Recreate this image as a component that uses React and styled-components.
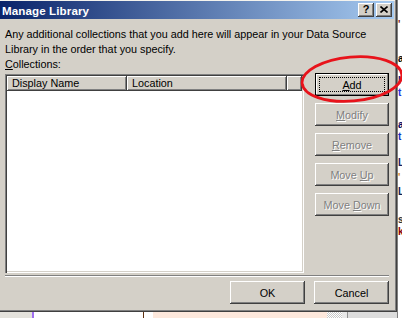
import React from 'react';
import styled, { createGlobalStyle } from 'styled-components';

const Global = createGlobalStyle`
  html, body { margin: 0; padding: 0; background: #fff; overflow: hidden; }
  #root { width: 402px; height: 318px; }
`;

const Screen = styled.div`
  position: relative;
  width: 402px;
  height: 318px;
  overflow: hidden;
  display: grid;
  grid-template-columns: 397px 5px;
  grid-template-rows: 312px 6px;
  background: #fff;
  font-family: "Liberation Sans", Arial, sans-serif;
`;

const Dialog = styled.div`
  grid-column: 1;
  grid-row: 1;
  background: #d4d0c8;
  box-shadow: inset -1px -1px #404040, inset -2px -2px #808080, inset 0 1px #f4f3ee;
  padding: 1px 3px 3px 0;
  display: flex;
  flex-direction: column;
  font-size: 10.8px;
  color: #000;
`;

const TitleBar = styled.div`
  height: 18px;
  flex: none;
  display: flex;
  align-items: center;
  justify-content: space-between;
  padding: 0 2px 0 2px;
  background: linear-gradient(to right, #0a246a, #a6caf0);
`;

const Title = styled.span`
  color: #fff;
  font-weight: bold;
  font-size: 11.6px;
  letter-spacing: 0.1px;
`;

const CaptionButtons = styled.div`
  display: flex;
  gap: 2px;
`;

const CaptionButton = styled.div`
  width: 16px;
  height: 14px;
  box-sizing: border-box;
  background: #d4d0c8;
  box-shadow: inset -1px -1px #404040, inset 1px 1px #fff, inset -2px -2px #808080;
  display: flex;
  align-items: center;
  justify-content: center;
  font-weight: bold;
  font-size: 11px;
  line-height: 1;
  padding-bottom: 1px;
`;

const Body = styled.div`
  flex: 1;
  display: flex;
  flex-direction: column;
  padding: 8px 5px 0 5px;
`;

const Description = styled.p`
  margin: 0;
  line-height: 15px;
`;

const ContentRow = styled.div`
  display: flex;
  gap: 11px;
  align-items: flex-start;
`;

const LeftCol = styled.div`
  width: 299px;
  display: flex;
  flex-direction: column;
`;

const Label = styled.div`
  line-height: 15px;
`;

const List = styled.div`
  margin-top: 2px;
  height: 199px;
  box-sizing: border-box;
  background: #fff;
  padding: 2px;
  box-shadow: inset 1px 1px #808080, inset 2px 2px #404040, inset -1px -1px #fff, inset -2px -2px #d4d0c8;
`;

const Header = styled.div`
  display: flex;
  height: 15px;
`;

const HeaderCell = styled.div`
  width: ${(p) => (p.$w ? `${p.$w}px` : 'auto')};
  flex: ${(p) => (p.$w ? 'none' : '1')};
  box-sizing: border-box;
  background: #d4d0c8;
  padding-left: 5px;
  line-height: 15px;
  box-shadow: inset -1px -1px #404040, inset 1px 1px #fff, inset -2px -2px #808080;
  white-space: nowrap;
  overflow: hidden;
`;

const RightCol = styled.div`
  width: 74px;
  padding-top: 16px;
  display: flex;
  flex-direction: column;
  gap: 7px;
`;

const PushButton = styled.button`
  position: relative;
  width: ${(p) => p.$w || 74}px;
  height: 23px;
  box-sizing: border-box;
  margin: 0;
  padding: 0;
  border: none;
  background: #d4d0c8;
  font-family: inherit;
  font-size: 10.8px;
  color: ${(p) => (p.disabled ? '#808080' : '#000')};
  text-shadow: ${(p) => (p.disabled ? '1px 1px 0 #fff' : 'none')};
  box-shadow: ${(p) =>
    p.$default
      ? 'inset 0 0 0 1px #000, inset -2px -2px #808080, inset 2px 2px #fff'
      : 'inset -1px -1px #404040, inset 1px 1px #fff, inset -2px -2px #808080'};
  &::after {
    content: '';
    display: ${(p) => (p.$default ? 'block' : 'none')};
    position: absolute;
    inset: 4px;
    border: 1px dotted #000;
  }
  u { text-decoration: underline; text-underline-offset: 1px; }
`;

const Separator = styled.div`
  margin-top: 2px;
  height: 0;
  border-top: 1px solid #808080;
  border-bottom: 1px solid #fff;
`;

const Footer = styled.div`
  margin-top: 4px;
  display: flex;
  justify-content: flex-end;
  gap: 9px;
`;

const RightStrip = styled.div`
  grid-column: 2;
  grid-row: 1 / 3;
  background: #fff;
  overflow: hidden;
  display: flex;
  flex-direction: column;
  box-shadow: inset 1px 0 #808080;
  font-family: "Liberation Sans", Arial, sans-serif;
  font-size: 10px;
  line-height: 9px;
`;

const StripChar = styled.span`
  display: block;
  margin-top: ${(p) => p.$gap}px;
  margin-left: 1px;
  color: ${(p) => p.$c};
  font-weight: bold;
  height: 9px;
  overflow: hidden;
`;

const BottomStrip = styled.div`
  grid-column: 1;
  grid-row: 2;
  display: flex;
  background: #e8e8e8;
`;

const Segment = styled.div`
  width: ${(p) => p.$w}px;
  flex: ${(p) => (p.$w ? 'none' : '1')};
  background: ${(p) => p.$bg};
`;

const Checker = styled.div`
  width: 15px;
  background-image: repeating-conic-gradient(#c8c8c8 0 25%, #fff 0 50%);
  background-size: 2px 2px;
`;

const Overlay = styled.svg`
  position: absolute;
  left: 0;
  top: 0;
  pointer-events: none;
`;

const stripChars = [
  { ch: "'", c: '#7a1010', gap: 20 },
  { ch: 'a', c: '#000', gap: 25 },
  { ch: 'H', c: '#102080', gap: 13 },
  { ch: 't', c: '#2030e0', gap: 3 },
  { ch: 'a', c: '#000060', gap: 23 },
  { ch: 't', c: '#1030c0', gap: 3 },
  { ch: 'L', c: '#1a2060', gap: 17 },
  { ch: "'", c: '#d08020', gap: 6 },
  { ch: 'L', c: '#102050', gap: 5 },
  { ch: 's', c: '#303030', gap: 19 },
  { ch: 'k', c: '#8b0000', gap: 3 },
];

export default function App() {
  return (
    <>
      <Global />
      <Screen>
        <Dialog>
          <TitleBar>
            <Title>Manage Library</Title>
            <CaptionButtons>
              <CaptionButton>?</CaptionButton>
              <CaptionButton>
                <svg width="8" height="7" viewBox="0 0 8 7">
                  <path d="M0.5 0.5 L7.5 6.5 M7.5 0.5 L0.5 6.5" stroke="#000" strokeWidth="1.6" />
                </svg>
              </CaptionButton>
            </CaptionButtons>
          </TitleBar>
          <Body>
            <Description>
              Any additional collections that you add here will appear in your Data Source
              <br />
              Library in the order that you specify.
            </Description>
            <ContentRow>
              <LeftCol>
                <Label>
                  <u>C</u>ollections:
                </Label>
                <List>
                  <Header>
                    <HeaderCell $w={120}>Display Name</HeaderCell>
                    <HeaderCell $w={160}>Location</HeaderCell>
                    <HeaderCell />
                  </Header>
                </List>
              </LeftCol>
              <RightCol>
                <PushButton $default>
                  <u>A</u>dd
                </PushButton>
                <PushButton disabled>
                  <u>M</u>odify
                </PushButton>
                <PushButton disabled>
                  <u>R</u>emove
                </PushButton>
                <PushButton disabled>
                  Move <u>U</u>p
                </PushButton>
                <PushButton disabled>
                  Move <u>D</u>own
                </PushButton>
              </RightCol>
            </ContentRow>
            <Separator />
            <Footer>
              <PushButton $w={75}>OK</PushButton>
              <PushButton $w={75}>Cancel</PushButton>
            </Footer>
          </Body>
        </Dialog>
        <RightStrip>
          {stripChars.map((s, i) => (
            <StripChar key={i} $c={s.c} $gap={s.gap}>
              {s.ch}
            </StripChar>
          ))}
        </RightStrip>
        <BottomStrip>
          <Segment $w={32} $bg="#e4e2dc" />
          <Segment $w={2} $bg="#a070f0" />
          <Segment $w={109} $bg="#fff" />
          <Segment $w={1} $bg="#603010" />
          <Segment $w={9} $bg="#fff" />
          <Segment $w={174} $bg="#fde8dc" />
          <Checker />
          <Segment $w={5} $bg="#e8e8e8" />
          <Segment $w={1} $bg="#909090" />
          <Segment $bg="#dcdcdc" />
        </BottomStrip>
        <Overlay width="402" height="318" viewBox="0 0 402 318">
          <ellipse
            cx="352"
            cy="79"
            rx="50"
            ry="22"
            transform="rotate(-5 352 79)"
            fill="none"
            stroke="#e8131b"
            strokeWidth="2.8"
          />
        </Overlay>
      </Screen>
    </>
  );
}
